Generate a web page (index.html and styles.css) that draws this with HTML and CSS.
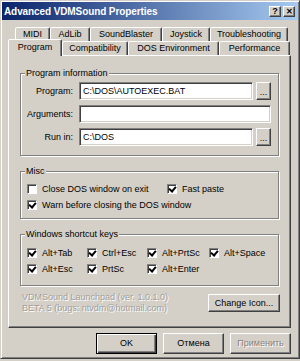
FILE: index.html
```html
<!DOCTYPE html>
<html>
<head>
<meta charset="utf-8">
<link rel="stylesheet" href="styles.css">
</head>
<body>
<div class="window">
  <div class="titlebar">
    <span class="title">Advanced VDMSound Properties</span>
    <div class="tb-btns">
      <span class="tb-btn">?</span>
      <span class="tb-btn close">✕</span>
    </div>
  </div>
  <div class="content">
    <div class="tabs">
      <div class="tabrow back">
        <div class="tab w-midi">MIDI</div>
        <div class="tab w-adlib">AdLib</div>
        <div class="tab w-sb">SoundBlaster</div>
        <div class="tab w-joy">Joystick</div>
        <div class="tab w-trb">Troubleshooting</div>
      </div>
      <div class="tabrow front">
        <div class="tab selected w-prog">Program</div>
        <div class="tab w-comp">Compatibility</div>
        <div class="tab w-dos">DOS Environment</div>
        <div class="tab w-perf">Performance</div>
      </div>
    </div>
    <div class="panel">
      <fieldset class="group g-prog">
        <legend>Program information</legend>
        <div class="form">
          <label class="lbl">Program:</label>
          <div class="input">C:\DOS\AUTOEXEC.BAT</div>
          <div class="btn dots">...</div>
          <label class="lbl">Arguments:</label>
          <div class="input span2"></div>
          <label class="lbl">Run in:</label>
          <div class="input">C:\DOS</div>
          <div class="btn dots">...</div>
        </div>
      </fieldset>
      <fieldset class="group g-misc">
        <legend>Misc</legend>
        <div class="checks misc">
          <div class="chk"><span class="box"></span><span>Close DOS window on exit</span></div>
          <div class="chk"><span class="box on"></span><span>Fast paste</span></div>
          <div class="chk wide"><span class="box on"></span><span>Warn before closing the DOS window</span></div>
        </div>
      </fieldset>
      <fieldset class="group g-keys">
        <legend>Windows shortcut keys</legend>
        <div class="checks keys">
          <div class="chk"><span class="box on"></span><span>Alt+Tab</span></div>
          <div class="chk"><span class="box on"></span><span>Ctrl+Esc</span></div>
          <div class="chk"><span class="box on"></span><span>Alt+PrtSc</span></div>
          <div class="chk"><span class="box on"></span><span>Alt+Space</span></div>
          <div class="chk"><span class="box on"></span><span>Alt+Esc</span></div>
          <div class="chk"><span class="box on"></span><span>PrtSc</span></div>
          <div class="chk"><span class="box on"></span><span>Alt+Enter</span></div>
        </div>
      </fieldset>
      <div class="about">
        <div class="about-text">
          <div>VDMSound Launchpad (ver. 1.0.1.0)</div>
          <div>BETA 5 (bugs: ntvdm@hotmail.com)</div>
        </div>
        <div class="btn change">Change Icon...</div>
      </div>
    </div>
    <div class="dlg-buttons">
      <div class="btn dlg default">OK</div>
      <div class="btn dlg">Отмена</div>
      <div class="btn dlg disabled">Применить</div>
    </div>
  </div>
</div>
</body>
</html>
```

FILE: styles.css
```css
* { box-sizing: border-box; }
html, body { margin: 0; padding: 0; background: #d4d0c8; }
body {
  font-family: "Liberation Sans", Arial, sans-serif;
  font-size: 9px;
  color: #000;
}
.window {
  width: 300px;
  height: 359px;
  background: #d4d0c8;
  border: 1px solid;
  border-color: #d4d0c8 #404040 #404040 #d4d0c8;
  box-shadow: inset 1px 1px 0 #fff, inset -1px -1px 0 #808080;
  padding: 1px;
}
.titlebar {
  height: 18px;
  background: linear-gradient(to right, #0a246a, #a6caf0);
  display: flex;
  align-items: center;
  justify-content: space-between;
  padding: 0 3px 0 2px;
}
.title {
  color: #fff;
  font-weight: bold;
  font-size: 10px;
  letter-spacing: -0.1px;
}
.tb-btns { display: flex; gap: 2px; }
.tb-btn {
  width: 12px;
  height: 11px;
  background: #d4d0c8;
  border: 1px solid;
  border-color: #fff #404040 #404040 #fff;
  box-shadow: inset -1px -1px 0 #808080;
  font-size: 9px;
  font-weight: bold;
  line-height: 9px;
  text-align: center;
}
.tb-btn.close { font-size: 8px; }
.content { padding: 0 7px 0 6px; }
.tabs { margin-top: 7px; }
.tabrow { display: flex; height: 14px; }
.tabrow.back { padding-left: 7px; }
.tabrow.front { padding-left: 0; }
.tab {
  height: 14px;
  border: 1px solid;
  border-bottom: none;
  border-color: #fff #404040 transparent #fff;
  box-shadow: inset -1px 0 0 #808080;
  border-radius: 2px 2px 0 0;
  text-align: center;
  line-height: 12px;
  white-space: nowrap;
  background: #d4d0c8;
}
.tab.selected {
  height: 17px;
  margin-top: -2px;
  margin-bottom: -1px;
  position: relative;
  z-index: 1;
  line-height: 15px;
}
.w-midi { width: 35px; }
.w-adlib { width: 40px; }
.w-sb { width: 72px; }
.w-joy { width: 48px; }
.w-trb { width: 78px; }
.w-prog { width: 54px; }
.w-comp { width: 66px; }
.w-dos { width: 91px; }
.w-perf { width: 71px; }

.panel {
  height: 273px;
  border: 1px solid;
  border-color: #fff #404040 #404040 #fff;
  box-shadow: inset -1px -1px 0 #808080;
  padding: 12px 11px 0 11px;
}
.group {
  margin: 0;
  padding: 0;
  border: 1px solid #808080;
  box-shadow: inset 1px 1px 0 #fff, 1px 1px 0 #fff;
  min-width: 0;
}
.group legend {
  margin-left: 4px;
  padding: 0 1px;
  line-height: 11px;
  background: #d4d0c8;
}
.g-prog { height: 88px; }
.g-misc { margin-top: 10px; height: 53px; }
.g-keys { margin-top: 10px; height: 57px; }

.form {
  display: grid;
  grid-template-columns: 55px 174px 15px;
  grid-auto-rows: 18px;
  column-gap: 3px;
  row-gap: 5px;
  padding-top: 3px;
}
.lbl {
  text-align: right;
  padding-right: 3px;
  line-height: 18px;
}
.input {
  background: #fff;
  border: 1px solid;
  border-color: #808080 #fff #fff #808080;
  box-shadow: inset 1px 1px 0 #404040, inset -1px -1px 0 #d4d0c8;
  padding-left: 3px;
  line-height: 16px;
  white-space: nowrap;
}
.span2 { grid-column: span 2; }
.btn {
  background: #d4d0c8;
  border: 1px solid;
  border-color: #fff #404040 #404040 #fff;
  box-shadow: inset -1px -1px 0 #808080;
  text-align: center;
  white-space: nowrap;
}
.dots { line-height: 18px; font-size: 9px; }

.checks {
  display: grid;
  row-gap: 6px;
  padding-left: 6px;
}
.checks.misc { grid-template-columns: 140px auto; padding-top: 7px; }
.checks.keys { grid-template-columns: 60px 60px 62px auto; padding-top: 8px; }
.chk.wide { grid-column: span 2; }
.chk {
  display: flex;
  align-items: center;
  gap: 5px;
  height: 10px;
  line-height: 10px;
  white-space: nowrap;
}
.box {
  width: 10px;
  height: 10px;
  flex: none;
  background: #fff;
  border: 1px solid;
  border-color: #808080 #fff #fff #808080;
  box-shadow: inset 1px 1px 0 #404040;
  position: relative;
}
.box.on::after {
  content: "";
  position: absolute;
  left: 2px;
  top: 0px;
  width: 3px;
  height: 5px;
  border: solid #000;
  border-width: 0 2px 2px 0;
  transform: rotate(40deg);
}

.about {
  display: flex;
  justify-content: space-between;
  align-items: center;
  margin-top: 6px;
  padding-left: 2px;
  padding-right: 0;
}
.about-text {
  color: #a0a0a0;
  line-height: 11px;
  text-shadow: 1px 1px 0 #fff;
}
.change {
  width: 72px;
  height: 18px;
  line-height: 16px;
  margin-right: -1px;
}

.dlg-buttons {
  display: flex;
  justify-content: flex-end;
  gap: 6px;
  margin-top: 5px;
  padding-right: 0;
}
.dlg {
  width: 61px;
  height: 21px;
  line-height: 19px;
}
.dlg.default {
  border: 1px solid #000;
  box-shadow: inset 1px 1px 0 #fff, inset -1px -1px 0 #404040, inset -2px -2px 0 #808080;
}
.dlg.disabled {
  color: #808080;
  text-shadow: 1px 1px 0 #fff;
}
```
